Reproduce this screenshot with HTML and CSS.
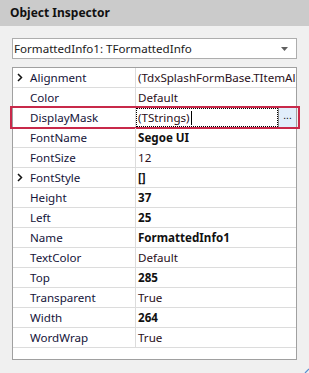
FILE: index.html
```html
<!DOCTYPE html>
<html>
<head>
<meta charset="utf-8">
<link rel="stylesheet" href="styles.css">
</head>
<body>
<div class="panel">
  <div class="header">Object Inspector</div>
  <div class="combo">
    <span class="combo-text">FormattedInfo1: TFormattedInfo</span>
    <svg class="combo-arrow" width="7" height="4" viewBox="0 0 7 4"><path d="M0 0H7L3.5 4Z" fill="#606060"/></svg>
  </div>
  <div class="grid">
    <div class="row"><div class="name"><svg class="chev" width="6" height="9" viewBox="0 0 6 9"><path d="M1 1L4.5 4.5L1 8" fill="none" stroke="#111" stroke-width="1.5"/></svg>Alignment</div><div class="value">(TdxSplashFormBase.TItemAlignment)</div></div>
    <div class="row"><div class="name">Color</div><div class="value">Default</div></div>
    <div class="row selected"><div class="name">DisplayMask</div><div class="value editor"><span class="edit-text">(TStrings)<span class="caret"></span></span><span class="ellipsis">...</span></div><div class="highlight"></div></div>
    <div class="row"><div class="name">FontName</div><div class="value bold">Segoe UI</div></div>
    <div class="row"><div class="name">FontSize</div><div class="value">12</div></div>
    <div class="row"><div class="name"><svg class="chev" width="6" height="9" viewBox="0 0 6 9"><path d="M1 1L4.5 4.5L1 8" fill="none" stroke="#111" stroke-width="1.5"/></svg>FontStyle</div><div class="value bold">[]</div></div>
    <div class="row"><div class="name">Height</div><div class="value bold">37</div></div>
    <div class="row"><div class="name">Left</div><div class="value bold">25</div></div>
    <div class="row"><div class="name">Name</div><div class="value bold">FormattedInfo1</div></div>
    <div class="row"><div class="name">TextColor</div><div class="value">Default</div></div>
    <div class="row"><div class="name">Top</div><div class="value bold">285</div></div>
    <div class="row"><div class="name">Transparent</div><div class="value">True</div></div>
    <div class="row"><div class="name">Width</div><div class="value bold">264</div></div>
    <div class="row"><div class="name">WordWrap</div><div class="value">True</div></div>
    <div class="filler"></div>
  </div>
  <svg class="grip" width="5" height="5" viewBox="0 0 5 5"><path d="M1 5L5 1" stroke="#5b8fd0" stroke-width="1.2"/></svg>
</div>
</body>
</html>
```

FILE: styles.css
```css
html, body {
  margin: 0;
  padding: 0;
}
body {
  width: 309px;
  height: 373px;
  overflow: hidden;
  background: #f0f0f0;
  font-family: "Noto Sans", "Open Sans", sans-serif;
  font-size: 11.6px;
  color: #1a1a1a;
}
.panel {
  position: relative;
  width: 309px;
  height: 373px;
  display: flex;
  flex-direction: column;
}
.header {
  height: 26px;
  line-height: 26px;
  background: #cbcbcb;
  padding-left: 10px;
  font-weight: bold;
  font-size: 12px;
  color: #111;
}
.combo {
  margin: 12px 0 0 12px;
  width: 283px;
  height: 19px;
  background: #fff;
  border: 1px solid #adadad;
  display: flex;
  align-items: center;
  justify-content: space-between;
}
.combo-text {
  padding-left: 1px;
  line-height: 19px;
}
.combo-arrow {
  margin-right: 8px;
  margin-top: 1px;
}
.grid {
  margin: 8px 0 0 12px;
  width: 283px;
  background: #fff;
  border: 1px solid #a0a0a0;
  display: flex;
  flex-direction: column;
}
.row {
  position: relative;
  display: grid;
  grid-template-columns: 123px 1fr;
  height: 19px;
  border-bottom: 1px solid #dcdcdc;
}
.name {
  position: relative;
  border-right: 1px solid #dcdcdc;
  padding-left: 17px;
  line-height: 19px;
  white-space: nowrap;
  overflow: hidden;
  color: #14143a;
}
.chev {
  position: absolute;
  left: 4px;
  top: 5px;
}
.value {
  padding-left: 2px;
  line-height: 19px;
  white-space: nowrap;
  overflow: hidden;
  color: #2a1020;
}
.bold {
  font-weight: bold;
  color: #111;
}
.editor {
  padding-left: 0;
  display: flex;
}
.edit-text {
  flex: 1;
  position: relative;
  border: 1px dotted #000;
  padding-left: 1px;
  line-height: 17px;
  display: flex;
  align-items: center;
}
.caret {
  display: inline-block;
  width: 1px;
  height: 14px;
  background: #000;
  margin-left: 1px;
}
.ellipsis {
  width: 17px;
  border-left: 1px solid #8c8c8c;
  background: #e1eefb;
  text-align: center;
  font-family: "Liberation Sans", sans-serif;
  font-size: 10px;
  line-height: 15px;
  color: #000;
  letter-spacing: 0;
}
.highlight {
  position: absolute;
  left: -3px;
  right: -4px;
  top: -2px;
  bottom: -2px;
  border: 2px solid #c8294a;
  pointer-events: none;
}
.filler {
  height: 11px;
}
.grip {
  position: absolute;
  right: 0;
  bottom: 0;
}
```
